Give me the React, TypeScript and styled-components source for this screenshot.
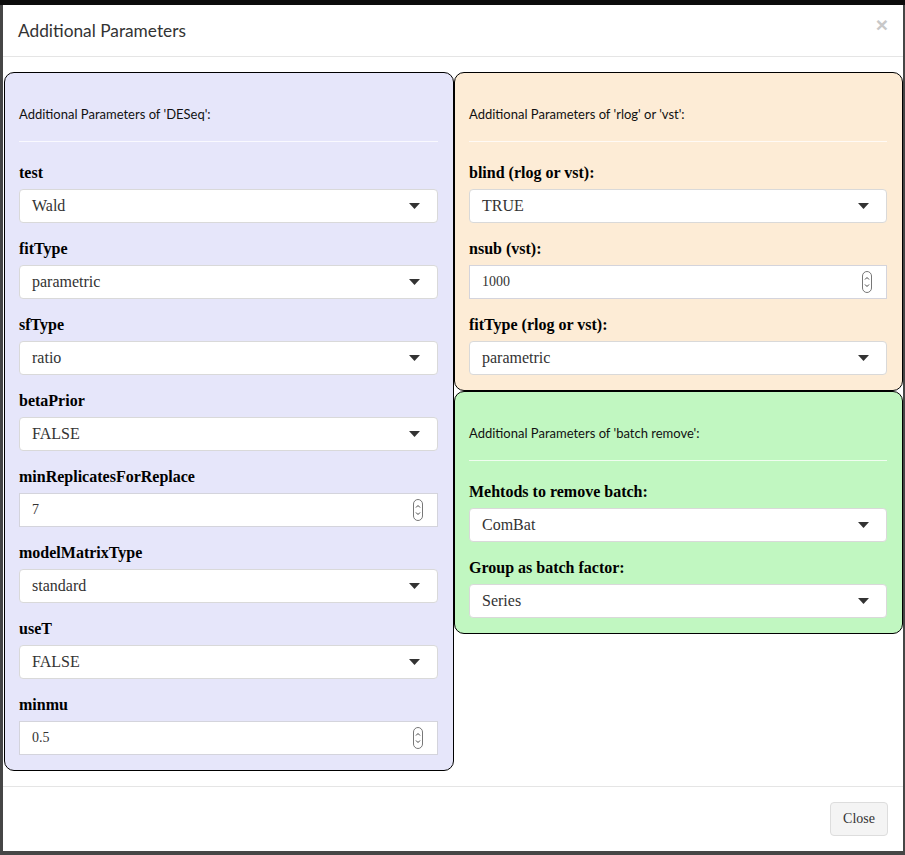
import React from "react";
import styled, { createGlobalStyle } from "styled-components";

const Global = createGlobalStyle`
  html, body { margin: 0; padding: 0; background: #3f3f3f; }
  body { font-family: "Liberation Serif", "Times New Roman", serif; }
  * { box-sizing: border-box; }
`;

const Backdrop = styled.div`
  width: 905px;
  height: 855px;
  padding: 5px 2px 4px 3px;
  background: linear-gradient(#0c0c0c 0 5px, #464646 5px);
`;

const Modal = styled.div`
  width: 900px;
  height: 846px;
  background: #fff;
  display: flex;
  flex-direction: column;
`;

const Header = styled.div`
  display: flex;
  align-items: center;
  justify-content: space-between;
  padding: 15px 15px 15px 15px;
  border-bottom: 1px solid #e5e5e5;
  height: 52px;
`;

const Title = styled.h4`
  margin: 0;
  font-family: "Lato", "Noto Sans", sans-serif;
  font-weight: 400;
  font-size: 17.3px;
  line-height: 21px;
  color: #333;
`;

const CloseX = styled.span`
  font-family: "Liberation Sans", Arial, sans-serif;
  font-size: 21px;
  font-weight: 700;
  line-height: 1;
  color: #c8c8c8;
  margin: -13px 0 0 0;
`;

const Body = styled.div`
  flex: 1;
  padding: 15px 1px 15px 1px;
  display: grid;
  grid-template-columns: 450px 449px;
  align-items: start;
`;

const Column = styled.div`
  display: flex;
  flex-direction: column;
`;

const Panel = styled.div<{ $bg: string }>`
  background: ${(p) => p.$bg};
  border: 1px solid #000;
  border-radius: 10px;
  padding: 0 15px 0 14px;
`;

const PanelHeading = styled.div`
  margin-top: 31px;
  font-family: "Lato", "Noto Sans", sans-serif;
  font-size: 13px;
  line-height: 20px;
  color: #111;
`;

const Rule = styled.hr`
  margin: 17px 0 20px;
  border: 0;
  border-top: 1px solid rgba(255, 255, 255, 0.75);
`;

const Group = styled.div`
  margin-bottom: 15px;
`;

const Label = styled.label`
  display: block;
  font-family: "Liberation Serif", "Times New Roman", serif;
  font-weight: 700;
  font-size: 16px;
  line-height: 22px;
  margin-bottom: 5px;
  color: #000;
`;

const Field = styled.div<{ $square?: boolean }>`
  height: 34px;
  background: #fff;
  border: 1px solid ${(p) => (p.$square ? "#d4d4dc" : "#d9d9d9")};
  border-radius: ${(p) => (p.$square ? "0" : "4px")};
  display: flex;
  align-items: center;
  justify-content: space-between;
  padding: 0 17px 0 12px;
  font-family: "Liberation Serif", "Times New Roman", serif;
  font-size: 16px;
  color: #333;
`;

const NumText = styled.span`
  font-size: 14px;
`;

const Footer = styled.div`
  border-top: 1px solid #e5e5e5;
  padding: 15px;
  display: flex;
  justify-content: flex-end;
`;

const Button = styled.button`
  height: 34px;
  padding: 6px 12px;
  font-family: "Liberation Serif", "Times New Roman", serif;
  font-size: 14px;
  color: #333;
  background: #f4f4f4;
  border: 1px solid #ddd;
  border-radius: 4px;
`;

const Caret = () => (
  <svg width="11" height="6" viewBox="0 0 11 6">
    <path d="M0 0 L11 0 L5.5 6 Z" fill="#333" />
  </svg>
);

const Spinner = () => (
  <svg width="10" height="22" viewBox="0 0 10 22" style={{ marginRight: -3 }}>
    <rect x="0.5" y="0.5" width="9" height="21" rx="4.5" fill="#fff" stroke="#777" />
    <path d="M3 8.5 L5 6.5 L7 8.5" fill="none" stroke="#444" strokeWidth="1" />
    <path d="M3 13.5 L5 15.5 L7 13.5" fill="none" stroke="#444" strokeWidth="1" />
  </svg>
);

type Item = { label: string; value: string; num?: boolean };

const SelectGroup = ({ label, value, num }: Item) => (
  <Group>
    <Label>{label}</Label>
    <Field $square={num}>
      {num ? <NumText>{value}</NumText> : <span>{value}</span>}
      {num ? <Spinner /> : <Caret />}
    </Field>
  </Group>
);

const deseq: Item[] = [
  { label: "test", value: "Wald" },
  { label: "fitType", value: "parametric" },
  { label: "sfType", value: "ratio" },
  { label: "betaPrior", value: "FALSE" },
  { label: "minReplicatesForReplace", value: "7", num: true },
  { label: "modelMatrixType", value: "standard" },
  { label: "useT", value: "FALSE" },
  { label: "minmu", value: "0.5", num: true },
];

const rlog: Item[] = [
  { label: "blind (rlog or vst):", value: "TRUE" },
  { label: "nsub (vst):", value: "1000", num: true },
  { label: "fitType (rlog or vst):", value: "parametric" },
];

const batch: Item[] = [
  { label: "Mehtods to remove batch:", value: "ComBat" },
  { label: "Group as batch factor:", value: "Series" },
];

const ParamPanel = ({ bg, heading, items }: { bg: string; heading: string; items: Item[] }) => (
  <Panel $bg={bg}>
    <PanelHeading>{heading}</PanelHeading>
    <Rule />
    {items.map((it) => (
      <SelectGroup key={it.label} {...it} />
    ))}
  </Panel>
);

export default function App() {
  return (
    <>
      <Global />
      <Backdrop>
        <Modal>
          <Header>
            <Title>Additional Parameters</Title>
            <CloseX>×</CloseX>
          </Header>
          <Body>
            <ParamPanel bg="#e6e6fa" heading="Additional Parameters of 'DESeq':" items={deseq} />
            <Column>
              <ParamPanel bg="#fdecd6" heading="Additional Parameters of 'rlog' or 'vst':" items={rlog} />
              <ParamPanel bg="#c1f7c1" heading="Additional Parameters of 'batch remove':" items={batch} />
            </Column>
          </Body>
          <Footer>
            <Button>Close</Button>
          </Footer>
        </Modal>
      </Backdrop>
    </>
  );
}
